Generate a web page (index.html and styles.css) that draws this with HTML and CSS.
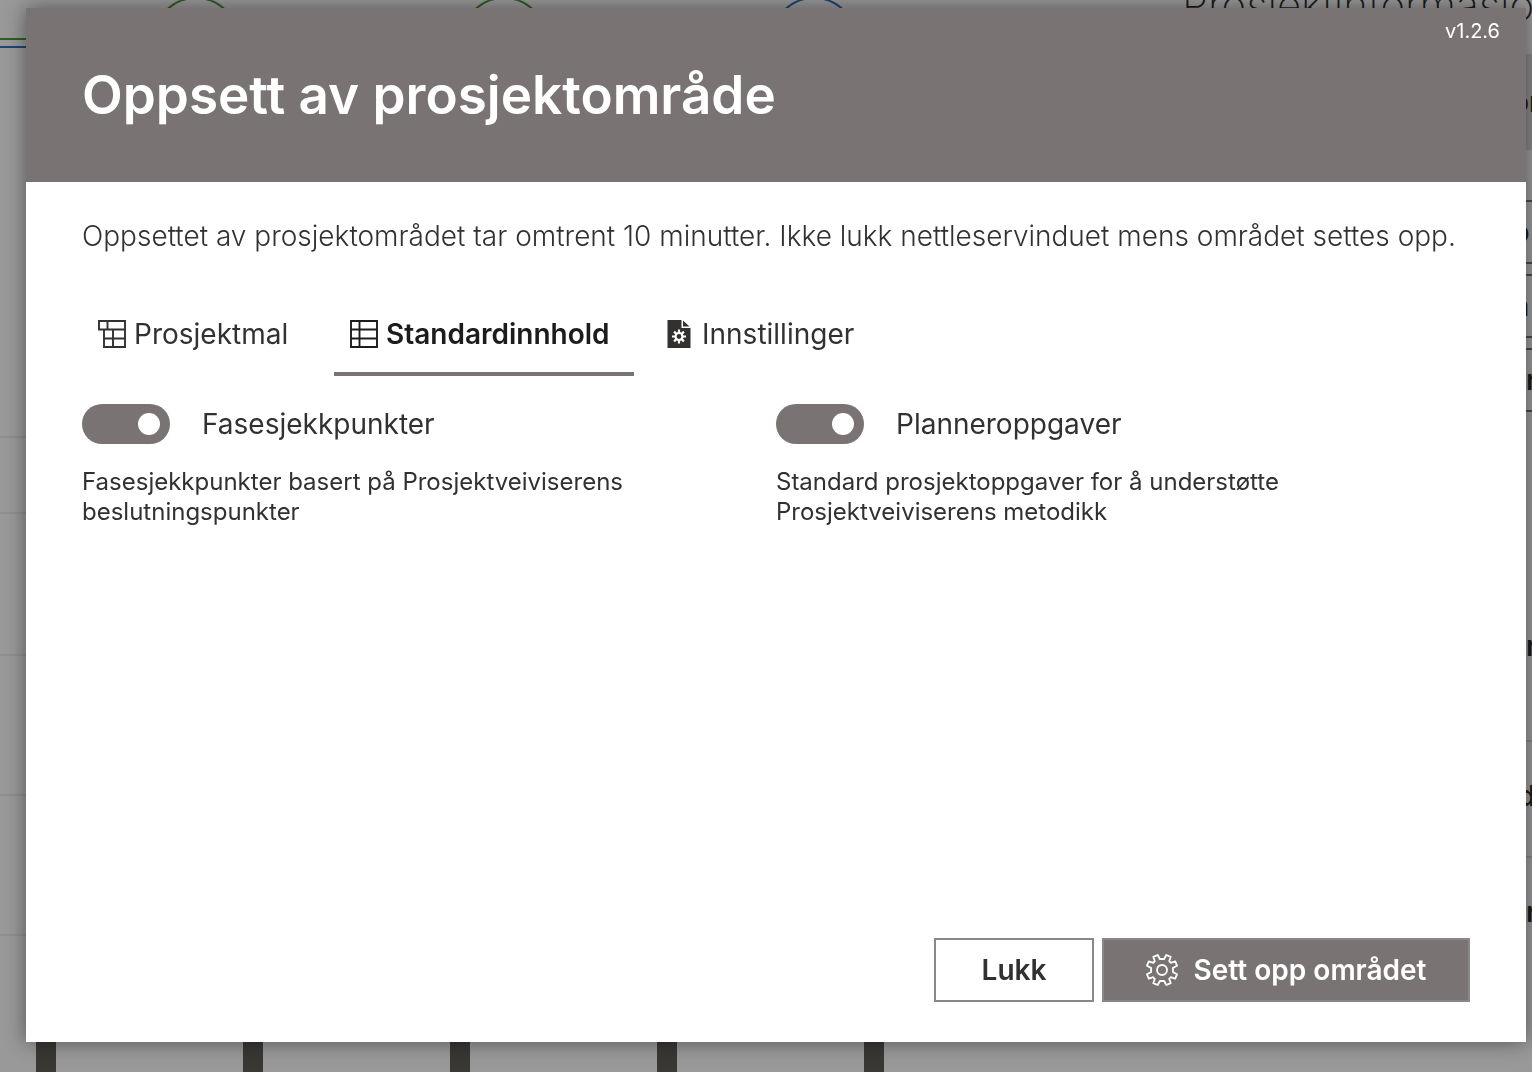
FILE: index.html
```html
<!DOCTYPE html>
<html lang="nb">
<head>
<meta charset="utf-8">
<meta name="viewport" content="width=device-width, initial-scale=1">
<title>Oppsett av prosjektområde</title>
<link rel="stylesheet" href="styles.css">
</head>
<body>
<div class="site" aria-hidden="true">
  <div class="site-main">
    <svg class="phases" width="1160" height="84" viewBox="0 0 1160 84" fill="none" stroke-width="2">
      <path d="M0 39H154M238 39H462M546 39H772" stroke="#2f5d26"/>
      <path d="M0 47H154M238 47H462M546 47H772" stroke="#1f4478"/>
      <circle cx="196" cy="40" r="42" stroke="#2f5d26"/>
      <circle cx="504" cy="40" r="42" stroke="#2f5d26"/>
      <circle cx="814" cy="40" r="42" stroke="#1f4478"/>
    </svg>
    <div class="rows">
      <div class="row row-first"></div>
      <div class="row row-short"></div>
      <div class="row row-tall"></div>
      <div class="row"></div>
      <div class="row"></div>
    </div>
    <div class="bars"><i></i><i></i><i></i><i></i><i></i></div>
  </div>
  <div class="site-info">
    <div class="info-title">Prosjektinformasjon</div>
    <div class="info-band">or</div>
    <div class="info-links">
      <div class="info-link">p</div>
      <div class="info-link">n</div>
      <div class="info-link info-late">r</div>
    </div>
    <div class="info-field info-tall info-late">r</div>
    <div class="info-field info-mid">d</div>
    <div class="info-field info-late">r</div>
  </div>
</div>

<div class="dialog" role="dialog" aria-modal="true" aria-labelledby="dialog-title">
  <header class="dialog-header">
    <span class="version">v1.2.6</span>
    <h1 class="title" id="dialog-title">Oppsett av prosjektområde</h1>
  </header>
  <main class="content">
    <p class="intro">Oppsettet av prosjektområdet tar omtrent 10 minutter. Ikke lukk nettleservinduet mens området settes opp.</p>
    <div class="tabs" role="tablist">
      <button class="tab" type="button" role="tab" aria-selected="false">
        <svg class="tab-icon" viewBox="0 0 28 28" fill="none" stroke="currentColor" stroke-width="1.900"><path d="M1 1H27V27H6V9.500H1ZM1 9.500H27M9.500 1V9.500M15 9.500V27M6 18.500H27"/></svg>
        <span>Prosjektmal</span>
      </button>
      <button class="tab tab-selected" type="button" role="tab" aria-selected="true">
        <svg class="tab-icon" viewBox="0 0 28 28" fill="none" stroke="currentColor" stroke-width="1.900"><path d="M1 1H27V27H1ZM1 9.500H27M1 18.500H27M9.500 1V27"/></svg>
        <span>Standardinnhold</span>
      </button>
      <button class="tab" type="button" role="tab" aria-selected="false">
        <svg class="tab-icon" viewBox="0 0 28 28"><path fill="currentColor" d="M1.500 0H15.500V8H24.500V28H1.500ZM17 0.500L23.500 6.500H17Z"/><g stroke="#fff" stroke-width="2.200" fill="none"><circle cx="13" cy="16.500" r="3.500"/><path d="M13 9.500V13M13 20V23.500M6 16.500H9.500M16.500 16.500H20M8.100 11.600L10.500 14M15.500 19L17.900 21.400M8.100 21.400L10.500 19M15.500 14L17.900 11.600"/></g></svg>
        <span>Innstillinger</span>
      </button>
    </div>
    <div class="options" role="tabpanel">
      <section class="option">
        <div class="option-head">
          <input class="toggle" type="checkbox" role="switch" id="checkpoints" checked>
          <label for="checkpoints">Fasesjekkpunkter</label>
        </div>
        <p class="description">Fasesjekkpunkter basert på Prosjektveiviserens beslutningspunkter</p>
      </section>
      <section class="option">
        <div class="option-head">
          <input class="toggle" type="checkbox" role="switch" id="planner" checked>
          <label for="planner">Planneroppgaver</label>
        </div>
        <p class="description">Standard prosjektoppgaver for å understøtte Prosjektveiviserens metodikk</p>
      </section>
    </div>
  </main>
  <footer class="actions">
    <button class="button" type="button">Lukk</button>
    <button class="button button-primary" type="button">
      <svg class="gear" viewBox="0 0 32 32" fill="none" stroke="currentColor" stroke-width="1.800" stroke-linejoin="round"><circle cx="16" cy="16" r="5"/><path d="M11.700 1L14 5.200Q16 4.800 18 5.200L20.300 1L24.700 2.800L23.200 7.300Q24 7.900 24.700 8.800L29.200 7.300L31 11.700L26.800 14Q27.200 16 26.800 18L31 20.300L29.200 24.700L24.700 23.200Q24.100 24 23.200 24.700L24.700 29.200L20.300 31L18 26.800Q16 27.200 14 26.800L11.700 31L7.300 29.200L8.800 24.700Q8 24.100 7.300 23.200L2.800 24.700L1 20.300L5.200 18Q4.800 16 5.200 14L1 11.700L2.800 7.300L7.300 8.800Q7.900 8 8.800 7.300L7.300 2.800Z"/></svg>
      <span>Sett opp området</span>
    </button>
  </footer>
</div>
</body>
</html>
```
FILE: styles.css
```css
* { box-sizing: border-box; }

body {
  margin: 0;
  overflow: hidden;
  background: #999;
  color: #323130;
  font-family: Inter, "Liberation Sans", sans-serif;
}

/* Dimmed page behind the dialog */
.site {
  display: flex;
  height: 100vh;
  overflow: hidden;
  color: #1d1c1a;
}

.site-main {
  display: flex;
  flex: 1;
  flex-direction: column;
  min-width: 0;
}

.phases { display: block; flex: none; }

.row {
  height: 140px;
  border-bottom: 2px solid #909090;
}

.row-first { height: 354px; }
.row-short { height: 76px; }
.row-tall { height: 142px; }

.bars {
  display: flex;
  flex: 1;
  gap: 187px;
  padding: 60px 0 0 36px;
}

.bars i {
  width: 20px;
  background: #393835;
}

.site-info {
  flex: none;
  width: 350px;
  font-size: 28px;
  font-weight: 600;
  line-height: 36px;
  white-space: nowrap;
  overflow: hidden;
}

.info-title {
  height: 54px;
  font-size: 42px;
  font-weight: 200;
  line-height: 10px;
}

.info-band {
  height: 96px;
  margin-bottom: 50px;
  padding: 30px 0 0 330px;
  background: #878787;
}

.info-links {
  display: grid;
  gap: 10px;
  margin-bottom: 188px;
}

.info-link {
  height: 64px;
  padding: 12px 0 0 330px;
  border: solid #4a4a4a;
  border-width: 2px 0;
}

.info-field {
  height: 116px;
  padding: 36px 0 0;
  border-bottom: 2px solid #868686;
}

.info-field:last-child { border-bottom: 0; }

.info-tall {
  height: 142px;
  padding-top: 28px;
}

.info-mid { padding-left: 336px; }
.info-late { padding-left: 344px; }

/* Dialog */
.dialog {
  position: fixed;
  inset: 8px 6px 30px 26px;
  display: flex;
  flex-direction: column;
  background: #fff;
  box-shadow: 0 0 20px rgba(0, 0, 0, 0.45);
}

.dialog-header {
  display: flex;
  flex-direction: column;
  height: 174px;
  padding: 10px 26px 0 56px;
  background: #797473;
  color: #fff;
}

.version {
  align-self: flex-end;
  font-size: 20px;
  line-height: 26px;
}

.title {
  margin: 16px 0 0;
  font-size: 53px;
  font-weight: 600;
  line-height: 70px;
}

.content {
  flex: 1;
  padding: 36px 56px 0;
}

.intro {
  margin: 0;
  font-size: 28px;
  font-weight: 300;
  line-height: 36px;
}

.tabs {
  display: flex;
  gap: 16px;
  margin-top: 34px;
}

.tab {
  display: flex;
  align-items: center;
  gap: 8px;
  min-width: 236px;
  height: 88px;
  padding: 8px 16px 0;
  border: 0;
  border-bottom: 4px solid transparent;
  background: none;
  color: #323130;
  font: 400 28px/36px Inter, "Liberation Sans", sans-serif;
}

.tab-selected {
  min-width: 300px;
  border-color: #797473;
  color: #1d1c1b;
  font-weight: 600;
}

.tab-icon { width: 28px; height: 28px; }

.options {
  display: grid;
  grid-template-columns: 1fr 1fr;
  margin-top: 28px;
}

.option-head {
  display: flex;
  align-items: center;
  gap: 32px;
  font-size: 28px;
  line-height: 40px;
}

.toggle {
  display: flex;
  align-items: center;
  justify-content: flex-end;
  appearance: none;
  width: 88px;
  height: 40px;
  margin: 0;
  padding-right: 10px;
  border-radius: 20px;
  background: #797473;
}

.toggle::before {
  content: "";
  width: 22px;
  height: 22px;
  border-radius: 50%;
  background: #fff;
}

.toggle:not(:checked) {
  justify-content: flex-start;
  padding-left: 10px;
  background: #a19f9d;
}

.description {
  max-width: 600px;
  margin: 23px 0 0;
  font-size: 24px;
  line-height: 30px;
}

.actions {
  display: flex;
  justify-content: flex-end;
  gap: 8px;
  padding: 0 56px 40px;
}

.button {
  display: flex;
  align-items: center;
  justify-content: center;
  gap: 16px;
  min-width: 160px;
  height: 64px;
  padding: 0 40px;
  border: 2px solid #8a8886;
  background: #fff;
  color: #323130;
  font: 600 28px/36px Inter, "Liberation Sans", sans-serif;
}

.button-primary {
  min-width: 368px;
  background: #797473;
  color: #fff;
}

.gear { width: 32px; height: 32px; }
```
